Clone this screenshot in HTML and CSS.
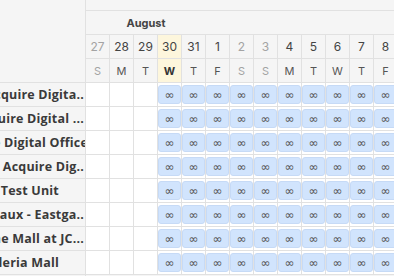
FILE: index.html
```html
<!DOCTYPE html>
<html lang="en">
<head>
    <meta charset="UTF-8">
    <meta name="viewport" content="width=device-width, initial-scale=1.0">
    <link rel="stylesheet" href="styles.css">
    <title>Planner</title>
</head>
<body>
    <div class="planner">
        <div class="nombres">
            <div class="cabecera-nombres"></div>
            <div class="nombre"><span>Acquire Digita..</span></div>
            <div class="nombre"><span>Acquire Digital ...</span></div>
            <div class="nombre cortado"><span>Acquire Digital Office</span></div>
            <div class="nombre"><span>Acquire Dig..</span></div>
            <div class="nombre corto"><span>Test Unit</span></div>
            <div class="nombre"><span>Bordeaux - Eastga..</span></div>
            <div class="nombre"><span>The Mall at JC...</span></div>
            <div class="nombre corto"><span>Galleria Mall</span></div>
        </div>

        <div class="linea">
            <div class="franja"></div>
            <div class="fila meses">
                <div class="mes agosto">August</div>
                <div class="mes septiembre"></div>
            </div>
            <div class="fila dias">
                <div class="celda finde">27</div>
                <div class="celda">28</div>
                <div class="celda">29</div>
                <div class="celda hoy">30</div>
                <div class="celda">31</div>
                <div class="celda">1</div>
                <div class="celda finde">2</div>
                <div class="celda finde">3</div>
                <div class="celda">4</div>
                <div class="celda">5</div>
                <div class="celda">6</div>
                <div class="celda">7</div>
                <div class="celda">8</div>
            </div>
            <div class="fila semana">
                <div class="celda finde">S</div>
                <div class="celda">M</div>
                <div class="celda">T</div>
                <div class="celda hoy">W</div>
                <div class="celda">T</div>
                <div class="celda">F</div>
                <div class="celda finde">S</div>
                <div class="celda finde">S</div>
                <div class="celda">M</div>
                <div class="celda">T</div>
                <div class="celda">W</div>
                <div class="celda">T</div>
                <div class="celda">F</div>
            </div>
            <div id="cuerpo"></div>
        </div>
    </div>

    <script>
        // 8 filas, 13 dias; las reservas empiezan el dia 30 (indice 3)
        const cuerpo = document.querySelector('#cuerpo');
        for (let f = 0; f < 8; f++) {
            const fila = document.createElement('div');
            fila.className = 'fila reservas';
            for (let d = 0; d < 13; d++) {
                const celda = document.createElement('div');
                celda.className = 'celda';
                if (d >= 3) {
                    const reserva = document.createElement('div');
                    reserva.className = 'reserva';
                    reserva.textContent = '∞';
                    celda.appendChild(reserva);
                }
                fila.appendChild(celda);
            }
            cuerpo.appendChild(fila);
        }
    </script>
</body>
</html>
```

FILE: styles.css
```css
* {
    margin: 0;
    padding: 0;
    box-sizing: border-box;
}
body {
    background-color: #f5f5f5;
    font-family: Inter, 'Open Sans', sans-serif;
    color: #3c3c3c;
    overflow: hidden;
}
.planner {
    display: flex;
    width: 394px;
    height: 276px;
    overflow: hidden;
}
.nombres {
    width: 86px;
    flex-shrink: 0;
    border-right: 1px solid #e1e1e1;
    background-color: #f5f5f5;
}
.cabecera-nombres {
    height: 83px;
    border-bottom: 1px solid #e1e1e1;
}
.nombre {
    height: 24px;
    border-bottom: 1px solid #e1e1e1;
    display: flex;
    align-items: center;
    justify-content: flex-end;
    padding-right: 1px;
    overflow: hidden;
    white-space: nowrap;
    font-family: 'Open Sans', sans-serif;
    font-size: 12.5px;
    letter-spacing: 0.2px;
    font-weight: 700;
    color: #3a3a3a;
}
.nombre.corto {
    padding-right: 26px;
}
.nombre.cortado span {
    margin-right: -4px;
}
.linea {
    flex-shrink: 0;
}
.franja {
    height: 11px;
    border-bottom: 1px solid #e1e1e1;
}
.fila {
    display: grid;
    grid-template-columns: repeat(13, 24px);
    height: 24px;
}
.meses {
    grid-template-columns: 120px 192px;
}
.mes {
    border-bottom: 1px solid #e1e1e1;
    display: flex;
    align-items: center;
    justify-content: center;
    font-size: 11px;
    font-weight: 700;
    color: #444;
}
.celda {
    border-right: 1px solid #e1e1e1;
    border-bottom: 1px solid #e1e1e1;
    display: flex;
    align-items: center;
    justify-content: center;
}
.dias .celda {
    font-size: 12px;
    color: #444;
}
.semana .celda {
    font-size: 11px;
    color: #555;
}
.dias .finde, .semana .finde {
    color: #a3a3a3;
}
.hoy {
    background-color: #fdf6dc;
}
.semana .hoy {
    font-weight: 700;
    color: #333;
}
.reservas .celda {
    background-color: #fff;
    align-items: stretch;
    padding: 2px 0;
}
.reserva {
    flex: 1;
    background-color: #d1e4fd;
    border: 1px solid #c6daf6;
    border-radius: 3px;
    display: flex;
    align-items: center;
    justify-content: center;
    font-family: 'DejaVu Sans', sans-serif;
    font-size: 12px;
    color: #555;
}
```
